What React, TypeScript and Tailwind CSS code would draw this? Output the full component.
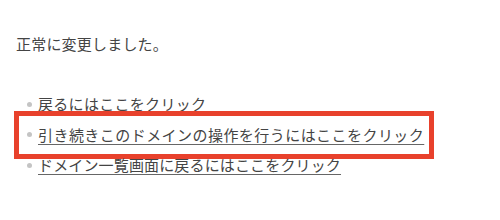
const items = [
  { label: "戻るにはここをクリック", link: false, tracking: "tracking-[0.3px]" },
  { label: "引き続きこのドメインの操作を行うにはここをクリック", link: true, tracking: "tracking-[0.45px]" },
  { label: "ドメイン一覧画面に戻るにはここをクリック", link: true, tracking: "tracking-[0.15px]" },
];

export default function App() {
  return (
    <div className="h-[220px] w-[500px] bg-white px-4 pt-[32px] font-['Noto_Sans_CJK_JP','Noto_Sans',sans-serif] text-[15px] text-[#444]">
      <p className="leading-[24px] tracking-[0.2px]">正常に変更しました。</p>
      <ul className="mt-[33px] pl-[11px]">
        {items.map((item, i) => (
          <li key={item.label} className={`relative flex items-center gap-[6px] leading-[30.5px] ${item.tracking}`}>
            <span className="h-[5px] w-[5px] shrink-0 rounded-full bg-[#c4c4c4]" />
            {item.link ? (
              <a href="#" className="underline decoration-[#666] underline-offset-[3px]">
                {item.label}
              </a>
            ) : (
              <span>{item.label}</span>
            )}
            {i === 1 && (
              <span className="pointer-events-none absolute left-[-13px] top-[-9px] h-[48px] w-[420px] border-[5px] border-[#e8412c]" />
            )}
          </li>
        ))}
      </ul>
    </div>
  );
}
